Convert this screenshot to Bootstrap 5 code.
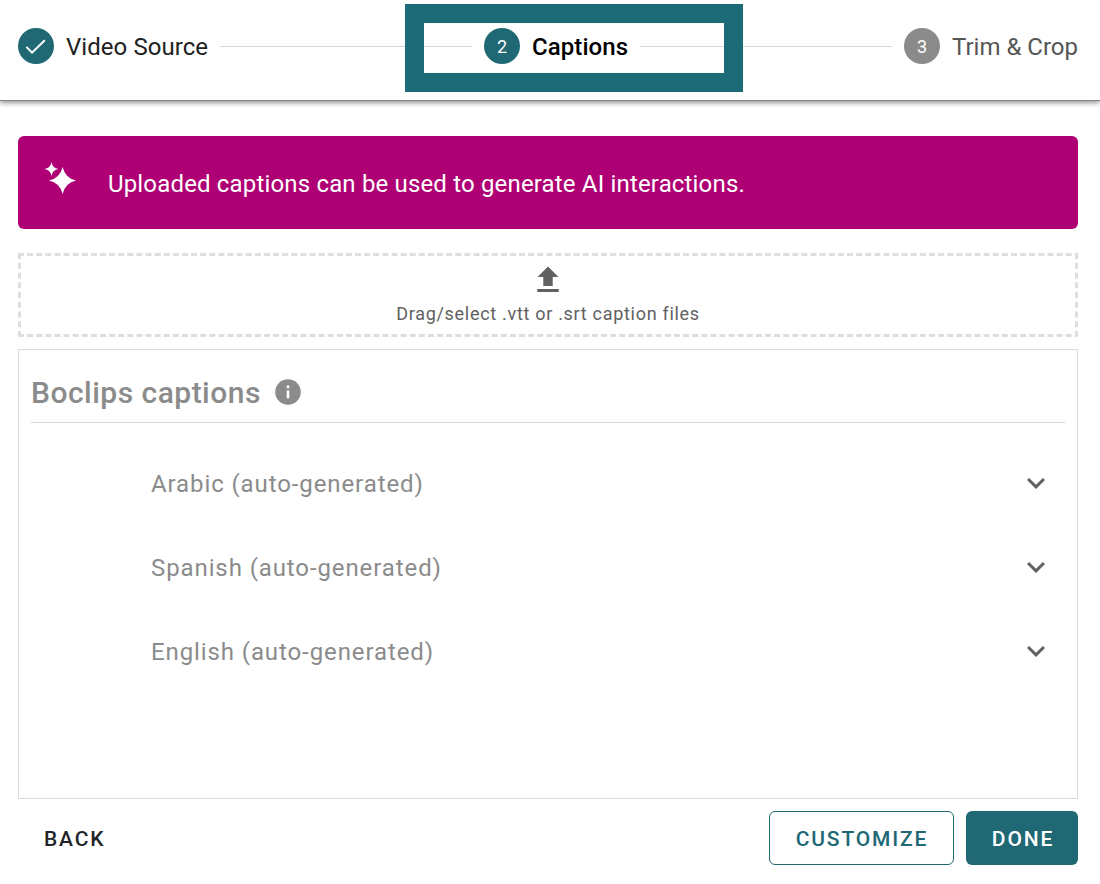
<!DOCTYPE html>
<html lang="en">
<head>
<meta charset="utf-8">
<meta name="viewport" content="width=device-width, initial-scale=1">
<title>Captions</title>
<link href="https://cdn.jsdelivr.net/npm/bootstrap@5.3.0/dist/css/bootstrap.min.css" rel="stylesheet">
<style>
  :root { --teal: #206874; }
  body { font-family: Roboto, "Liberation Sans", sans-serif; color: #212121; background: #fff; height: 884px; overflow: hidden; }
  .stepper { height: 101px; padding: 0 22px 9px 18px; border-bottom: 1px solid #858585; box-shadow: 0 2px 5px rgba(0,0,0,.42); }
  .step { gap: 12px; font-size: 24px; line-height: 36px; white-space: nowrap; }
  .step-label { padding-top: 2px; }
  .step-done { letter-spacing: .06px; }
  .step-now { font-weight: 500; letter-spacing: .08px; }
  .step-next { color: #555; }
  .step-dot { width: 36px; height: 36px; background: var(--teal); color: #fff; font-size: 18px; }
  .step-num { padding-top: 2px; }
  .step-dot.idle { background: #8b8b8b; }
  .step-line { height: 1px; background: #d6d6d6; margin: 1px 12px 0; }
  .focus-frame { left: 405px; top: 4px; width: 338px; height: 88px; border: 19px solid #1e6b78; }
  .page { padding: 35px 22px 0 18px; }
  .notice { height: 93px; border-radius: 6px; background: #ae0074; color: #fff; font-size: 24px; letter-spacing: .165px; padding: 2px 26px 0; }
  .notice svg { margin: -8px 28px 0 0; }
  .drop { height: 84px; margin-top: 24px; color: #616161; font-size: 18px; letter-spacing: .7px; line-height: 24px; }
  .drop-edge { left: 0; top: 0; }
  .drop-icon { margin: 10px 0 3px; }
  .panel { height: 450px; margin-top: 12px; border: 1px solid #dcdcdc; padding: 0 12px; color: #8b8b8b; }
  .panel-title { height: 73px; border-bottom: 1px solid #d6d6d6; font-size: 30px; font-weight: 500; letter-spacing: .48px; padding-top: 12px; gap: 14px; }
  .langs { padding: 19px 11.500px 0 120px; }
  .lang { height: 84px; font-size: 24px; letter-spacing: .9px; }
  .lang svg { margin-bottom: 3px; }
  .footer-bar { margin-top: 12px; gap: 12px; }
  .act { height: 54px; padding: 2px 25px 0 26px; border-radius: 6px; font-size: 21px; font-weight: 500; letter-spacing: 1.850px; line-height: 1; }
  .act-main { width: 112px; padding: 2px 0 0 2px; }
  .act-main, .act-main:hover { background: var(--teal); color: #fff; }
  .act-line { width: 185px; border: 1px solid var(--teal); color: var(--teal); padding: 2px 0 0 1px; }
</style>
</head>
<body>
<header class="stepper d-flex align-items-center position-relative">
  <div class="step d-flex align-items-center">
    <span class="step-dot rounded-circle d-flex align-items-center justify-content-center">
      <svg width="36" height="36" viewBox="0 0 36 36" fill="none" stroke="#fff" stroke-width="2"><path d="M8.400 18.900 14 24.600 26.800 12.200"/></svg>
    </span>
    <span class="step-label step-done">Video Source</span>
  </div>
  <div class="step-line flex-fill"></div>
  <div class="step d-flex align-items-center text-black">
    <span class="step-dot step-num rounded-circle d-flex align-items-center justify-content-center">2</span>
    <span class="step-label step-now">Captions</span>
  </div>
  <div class="step-line flex-fill"></div>
  <div class="step d-flex align-items-center">
    <span class="step-dot step-num idle rounded-circle d-flex align-items-center justify-content-center">3</span>
    <span class="step-label step-next">Trim &amp; Crop</span>
  </div>
  <div class="focus-frame position-absolute"></div>
</header>

<main class="page">
  <div class="notice d-flex align-items-center">
    <svg class="flex-shrink-0" width="36" height="36" viewBox="0 0 36 36" fill="#fff"><path d="M18.600 5Q21.200 16 32 18.600Q21.200 21.200 18.600 32Q16 21.200 5 18.600Q16 16 18.600 5Z"/><path d="M7.500 0Q8.400 6.100 14.500 7Q8.400 7.900 7.500 14Q6.600 7.900 .300 7Q6.600 6.100 7.500 0Z"/></svg>
    <span>Uploaded captions can be used to generate AI interactions.</span>
  </div>

  <div class="drop position-relative d-flex flex-column align-items-center">
    <svg class="drop-edge position-absolute" width="1060" height="84" fill="none" stroke="#dedede" stroke-width="3"><path stroke-dasharray="6 3.110" d="M0 1.500H1060M0 82.500H1060"/><path stroke-dasharray="6 3.750" d="M1.500 0V84M1058.500 0V84"/></svg>
    <svg class="drop-icon" width="36" height="36" viewBox="0 0 36 36" fill="#616161"><path d="M18 3.500 28.500 14H22.700V23H13.300V14H7.500ZM7.300 26H28.700V29H7.300Z"/></svg>
    <span>Drag/select .vtt or .srt caption files</span>
  </div>

  <section class="panel">
    <div class="panel-title d-flex align-items-center">
      <span>Boclips captions</span>
      <svg width="26" height="26" viewBox="0 0 26 26"><circle cx="13" cy="13" r="12.800" fill="#8b8b8b"/><path d="M11.700 6.600H14.300V9.200H11.700ZM11.700 11.400H14.300V19.200H11.700Z" fill="#fff"/></svg>
    </div>
    <div class="langs">
      <div class="lang d-flex align-items-center justify-content-between"><span>Arabic (auto-generated)</span><svg width="36" height="36" viewBox="0 0 24 24" fill="#616161"><path d="M7.410 8.590 12 13.170l4.590-4.580L18 10l-6 6-6-6z"/></svg></div>
      <div class="lang d-flex align-items-center justify-content-between"><span>Spanish (auto-generated)</span><svg width="36" height="36" viewBox="0 0 24 24" fill="#616161"><path d="M7.410 8.590 12 13.170l4.590-4.580L18 10l-6 6-6-6z"/></svg></div>
      <div class="lang d-flex align-items-center justify-content-between"><span>English (auto-generated)</span><svg width="36" height="36" viewBox="0 0 24 24" fill="#616161"><path d="M7.410 8.590 12 13.170l4.590-4.580L18 10l-6 6-6-6z"/></svg></div>
    </div>
  </section>

  <footer class="footer-bar d-flex">
    <button class="btn act border-0 me-auto">BACK</button>
    <button class="btn act act-line">CUSTOMIZE</button>
    <button class="btn act act-main border-0">DONE</button>
  </footer>
</main>
<script src="https://cdn.jsdelivr.net/npm/bootstrap@5.3.0/dist/js/bootstrap.bundle.min.js"></script>
</body>
</html>
